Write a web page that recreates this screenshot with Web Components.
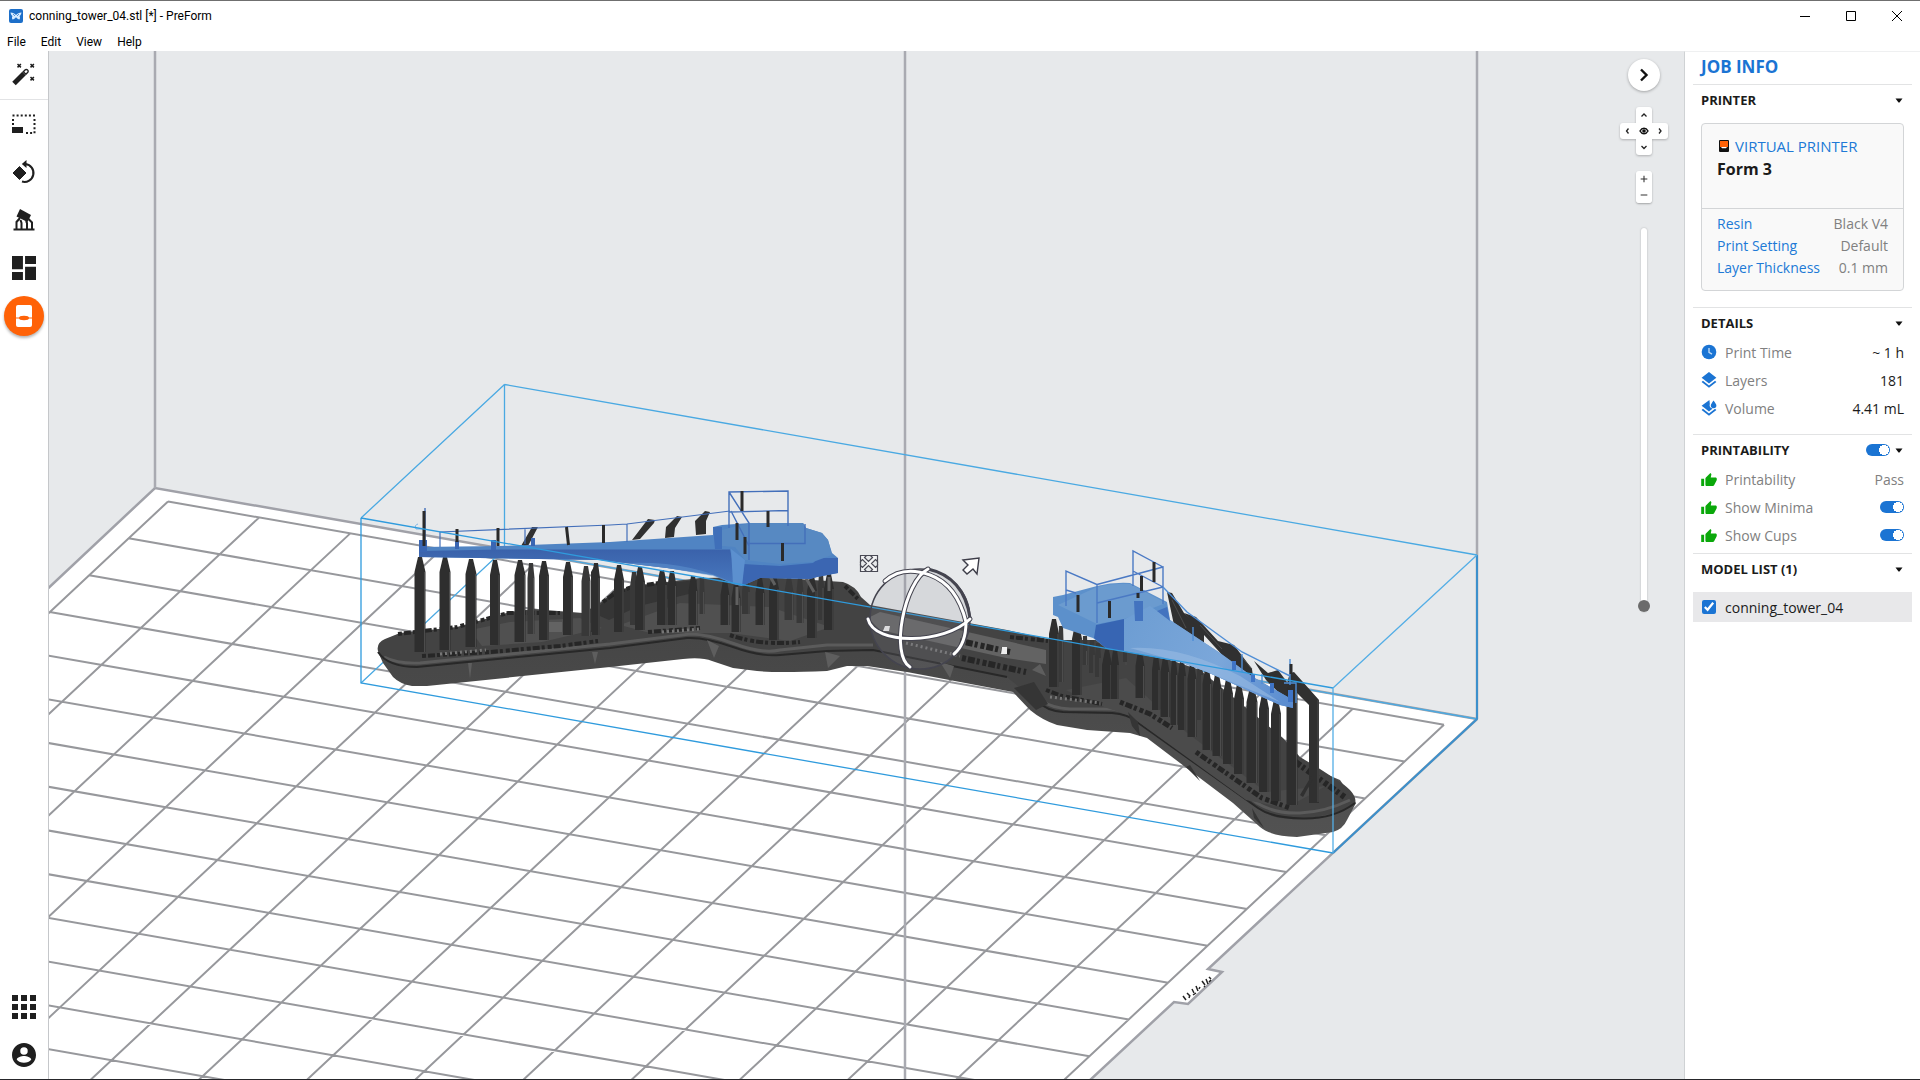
<!DOCTYPE html>
<html lang="en">
<head>
<meta charset="utf-8">
<title>conning_tower_04.stl [*] - PreForm</title>
<style>
	html, body {
		margin: 0;
		height: 100%;
	}
	body {
		font-family: "Open Sans", "Noto Sans", sans-serif;
		font-size: 12px;
		color: #1b1b1b;
		background: #fff;
	}
</style>
</head>
<body>
<pf-app></pf-app>

<script>
const ICONS = {
	logo: `<svg viewBox="0 0 14 14"><rect width="14" height="14" rx="2" fill="#1d6fc9"/><path d="M1.500 3.500c2.500 0 4 1 5.500 2.500 1.500-1.500 3-2.500 5.500-2.500-.3 2-1 3-2 3.500.8 1.200.6 2.400 0 3.500-1.400 0-2.500-1-3.500-2.200-1 1.200-2.100 2.200-3.500 2.200-.6-1.100-.8-2.300 0-3.500-1-.5-1.700-1.500-2-3.500z" fill="#d8ebff"/><path d="M4 5l2 2M10 5L8 7" stroke="#1d6fc9" stroke-width=".7"/></svg>`,
	wand: `<svg viewBox="0 0 24 24"><path d="M2 20.500L12 10.500" stroke="currentColor" stroke-width="5"/><path d="M11.300 8.700l1.700-1.700a1.800 1.800 0 0 1 2.600 0 1.800 1.800 0 0 1 0 2.600l-1.700 1.700z" fill="#fff" stroke="currentColor" stroke-width="1.400"/><path d="M5.500 1l3.400 3.400m0-3.400L5.500 4.400M18.500 1l3.400 3.400m0-3.400l-3.400 3.400M18.500 14l3.400 3.400m0-3.400l-3.400 3.400" stroke="currentColor" stroke-width="1.500"/></svg>`,
	scale: `<svg viewBox="0 0 24 24"><path d="M.500 3.500h23M1 7v6M22.500 7v15M14 21h8" fill="none" stroke="currentColor" stroke-width="2" stroke-dasharray="2 2.100"/><path d="M0 15h11v6H0z" fill="currentColor"/></svg>`,
	rotate: `<svg viewBox="0 -1 24 24"><path d="M7.500 5.500l6.500 6.500-6.500 6.500L1 12z" fill="currentColor" stroke="currentColor" stroke-width="1" stroke-linejoin="round"/><path d="M11 3h2.500a9 9 0 1 1-3.500 17.600" fill="none" stroke="currentColor" stroke-width="2.100"/><path d="M14.500-1v8L9.800 3z" fill="currentColor"/></svg>`,
	support: `<svg viewBox="0 0 24 24"><path d="M8 1l11 6-3.500 7L4.500 8.500z" fill="currentColor"/><path d="M1.500 21.500h21" stroke="currentColor" stroke-width="2"/><path d="M4.500 21v-7l3.500-4M9.500 21v-6l-1-3M15 21v-6l-1-2M20 21v-6.500L16.500 11" fill="none" stroke="currentColor" stroke-width="2"/></svg>`,
	layout: `<svg viewBox="3 3 18 18"><path d="M3 13h8.200V3H3v10zm0 8h8.200v-6H3v6zm9.800 0H21V11h-8.200v10zm0-18v6H21V3h-8.200z" fill="currentColor"/></svg>`,
	print: `<svg viewBox="0 0 24 24"><rect x="4" y="1" width="16" height="22" rx="2" fill="#fff"/><path d="M4 14h4c1-2 7-2 8 0h4" fill="none" stroke="#ff6207" stroke-width="1"/><ellipse cx="12" cy="14" rx="5" ry="2.200" fill="#ff6207"/></svg>`,
	apps: `<svg viewBox="0 0 24 24"><path d="M0 0h6v6H0zM9 0h6v6H9zM18 0h6v6h-6zM0 9h6v6H0zM9 9h6v6H9zM18 9h6v6h-6zM0 18h6v6H0zM9 18h6v6H9zM18 18h6v6h-6z" fill="currentColor"/></svg>`,
	account: `<svg viewBox="2 2 20 20"><path d="M12 2C6.480 2 2 6.480 2 12s4.480 10 10 10 10-4.480 10-10S17.520 2 12 2zm0 3.500a3 3 0 0 1 0 6.200 3 3 0 0 1 0-6.200zm0 13c-2.500 0-4.710-.9-6-2.500.03-1.990 4-3.080 6-3.080 1.990 0 5.970 1.090 6 3.080-1.290 1.600-3.500 2.500-6 2.500z" fill="currentColor"/></svg>`,
	clock: `<svg viewBox="0 0 16 16"><circle cx="8" cy="8" r="7.300" fill="#1b74d3"/><path d="M8 4v4.300l3 1.800" fill="none" stroke="#bcd9f5" stroke-width="1.400"/></svg>`,
	layers: `<svg viewBox="3 2 18 19.500"><path d="M11.990 18.540l-7.370-5.730L3 14.070l9 7 9-7-1.630-1.270-7.380 5.740zM12 16l7.360-5.730L21 9l-9-7-9 7 1.630 1.270L12 16z" fill="#1b74d3"/></svg>`,
	volume: `<svg viewBox="3 2 18 19.500"><path d="M11.990 18.540l-7.370-5.730L3 14.070l9 7 9-7-1.630-1.270-7.380 5.740zM12 16l4.500-3.500c-3-.5-4.500-3-3.500-6L12.500 2 3 9l1.630 1.270L12 16z" fill="#1b74d3"/><path d="M17.500 2.500c2 3 3.500 4.300 3.500 6.200a3.400 3.400 0 0 1-6.800 0c0-1.900 1.500-3.200 3.300-6.200z" fill="#1b74d3"/></svg>`,
	thumb: `<svg viewBox="0 1 24 20"><path d="M0 21h4.500V10H0v11zm24-11c0-1.100-.9-2-2-2h-7.310l.95-4.570.03-.32c0-.41-.17-.79-.44-1.060L14.170 1 7.590 7.590C6.700 8.400 6.500 8.800 6.500 9.500v9.500c0 1.100.9 2 2 2h9.500c.83 0 1.540-.5 1.840-1.220l3.800-7.050c.3-.5.360-.9.360-2.730z" fill="#0aa80a"/></svg>`,
	caret: `<svg viewBox="0 0 8 5"><path d="M.5.5h7L4.500 4.500h-1z" fill="#111"/></svg>`,
	form3: `<svg viewBox="0 0 10 12"><path d="M1 0h8a1 1 0 0 1 1 1v10a1 1 0 0 1-1 1H1a1 1 0 0 1-1-1V1a1 1 0 0 1 1-1z" fill="#111"/><path d="M1 1h8v6H1z" fill="#ff6207"/><path d="M2 7h6l-1 1.300H3z" fill="#fff"/></svg>`,
	eye: `<svg viewBox="0 0 12 12"><path d="M2 6c2-3.600 6-3.600 8 0-2 3.600-6 3.600-8 0z" fill="#fff" stroke="#111" stroke-width="1.500"/><circle cx="6" cy="6" r="1.800" fill="#111"/></svg>`,
	up: `<svg viewBox="0 0 12 12"><path d="M3.500 7.500L6 5l2.500 2.500" fill="none" stroke="#222" stroke-width="1.300"/></svg>`,
	down: `<svg viewBox="0 0 12 12"><path d="M3.500 5L6 7.500 8.500 5" fill="none" stroke="#222" stroke-width="1.300"/></svg>`,
	left: `<svg viewBox="0 0 12 12"><path d="M6.500 3.500L4.500 6l2 2.500" fill="none" stroke="#222" stroke-width="1.300"/></svg>`,
	right: `<svg viewBox="0 0 12 12"><path d="M5 3.500L7 6 5 8.500" fill="none" stroke="#222" stroke-width="1.300"/></svg>`,
	plus: `<svg viewBox="0 0 12 12"><path d="M2 6h8M6 2v8" stroke="#333" stroke-width="1.300"/></svg>`,
	minus: `<svg viewBox="0 0 12 12"><path d="M2 6h8" stroke="#333" stroke-width="1.300"/></svg>`,
	next: `<svg viewBox="0 0 12 12"><path d="M3 .5L8.500 6 3 11.500" fill="none" stroke="#111" stroke-width="2.400"/></svg>`,
	winmin: `<svg viewBox="0 0 12 12"><path d="M1 6.500h10" stroke="#000"/></svg>`,
	winmax: `<svg viewBox="0 0 12 12"><path d="M1.500 1.500h9v9h-9z" fill="none" stroke="#000"/></svg>`,
	winclose: `<svg viewBox="0 0 12 12"><path d="M1 1l10 10M11 1L1 11" stroke="#000"/></svg>`,
};

class PfIcon extends HTMLElement {
	constructor() {
		super();
		this.attachShadow({ mode: "open" });
	}

	connectedCallback() {
		const width = this.getAttribute("w") ?? "24";
		const height = this.getAttribute("h") ?? width;
		this.shadowRoot.innerHTML = `
			<style>
				:host { display: block; flex: none; width: ${width}px; height: ${height}px; }
				svg { display: block; width: 100%; height: 100%; overflow: visible; }
			</style>
			${ICONS[this.getAttribute("name")] ?? ""}
		`;
		this.shadowRoot.querySelector("svg")?.setAttribute("aria-hidden", "true");
	}
}
customElements.define("pf-icon", PfIcon);

class PfTitlebar extends HTMLElement {
	constructor() {
		super();
		this.attachShadow({ mode: "open" });
		this.shadowRoot.innerHTML = `
			<style>
				:host {
					display: block;
					background: #fff;
					color: #000;
					border-top: 1px solid #6f6f6f;
					font-family: Roboto, "Open Sans", sans-serif;
				}
				.bar {
					display: flex;
					align-items: center;
					height: 29px;
					padding-left: 9px;
					gap: 6px;
				}
				.title { flex: 1; }
				.bar button {
					display: grid;
					place-items: center;
					width: 46px;
					height: 28px;
				}
				.buttons { display: flex; }
				button {
					border: 0;
					padding: 0;
					margin: 0;
					background: none;
					font: inherit;
					color: inherit;
				}
				nav {
					display: flex;
					gap: 15px;
					height: 19px;
					align-items: center;
					padding: 2px 0 0 7px;
				}
			</style>
			<div class="bar">
				<pf-icon name="logo" w="14"></pf-icon>
				<span class="title"><slot></slot></span>
				<div class="buttons">
					<button aria-label="Minimize"><pf-icon name="winmin" w="12"></pf-icon></button>
					<button aria-label="Maximize"><pf-icon name="winmax" w="12"></pf-icon></button>
					<button aria-label="Close"><pf-icon name="winclose" w="12"></pf-icon></button>
				</div>
			</div>
			<nav>
				<button>File</button>
				<button>Edit</button>
				<button>View</button>
				<button>Help</button>
			</nav>
		`;
	}
}
customElements.define("pf-titlebar", PfTitlebar);

class PfToolbar extends HTMLElement {
	constructor() {
		super();
		this.attachShadow({ mode: "open" });
		this.shadowRoot.innerHTML = `
			<style>
				:host {
					display: flex;
					flex-direction: column;
					width: 48px;
					background: #fff;
					border-right: 1px solid #c5c7ca;
					color: #1f1f1f;
				}
				button {
					display: grid;
					place-items: center;
					height: 48px;
					width: 48px;
					border: 0;
					padding: 0;
					background: none;
					color: inherit;
				}
				hr {
					width: 100%;
					margin: 0;
					border: 0;
					border-top: 1px solid #e2e3e5;
				}
				.print span {
					display: grid;
					place-items: center;
					width: 40px;
					height: 40px;
					border-radius: 50%;
					background: #ff6207;
					box-shadow: 0 2px 3px rgba(0, 0, 0, 0.3);
				}
				.space { flex: 1; }
			</style>
			<button aria-label="One-click print"><pf-icon name="wand" w="24"></pf-icon></button>
			<hr>
			<button aria-label="Size"><pf-icon name="scale" w="24"></pf-icon></button>
			<button aria-label="Orientation"><pf-icon name="rotate" w="24"></pf-icon></button>
			<button aria-label="Supports"><pf-icon name="support" w="24"></pf-icon></button>
			<button aria-label="Layout"><pf-icon name="layout" w="24"></pf-icon></button>
			<button class="print" aria-label="Print"><span><pf-icon name="print" w="24"></pf-icon></span></button>
			<div class="space"></div>
			<button aria-label="Apps"><pf-icon name="apps" w="24"></pf-icon></button>
			<button aria-label="Account"><pf-icon name="account" w="24"></pf-icon></button>
		`;
	}
}
customElements.define("pf-toolbar", PfToolbar);

// supports: [center x, top, bottom, width]
const PILLARS_BACK = [
	[531, 563, 634, 7], [586, 566, 636, 9], [634, 572, 625, 8], [702, 577, 614, 5], [746, 577, 614, 8],
	[789, 577, 620, 9], [800, 577, 623, 7], [821, 573, 620, 6], [1061, 626, 682, 5], [1085, 636, 665, 5],
	[1092, 640, 673, 6], [1098, 643, 677, 6], [1125, 650, 662, 4], [1200, 660, 720, 6]
];
const PILLARS = [
	[420, 557, 652, 11], [445, 557, 650, 11], [471, 559, 647, 11], [495, 560, 645, 10], [520, 560, 642, 11],
	[544, 561, 640, 10], [568, 562, 635, 10], [596, 563, 635, 8], [619, 565, 632, 10], [640, 567, 630, 10],
	[662, 570, 625, 10], [672, 571, 625, 9], [693, 576, 625, 9], [725, 580, 625, 9], [736, 583, 632, 9],
	[760, 578, 625, 9], [774, 574, 640, 10], [812, 576, 638, 10], [829, 574, 630, 10],
	[1054, 619, 687, 10], [1077, 624, 695, 10], [1107, 650, 699, 10], [1115, 650, 699, 8], [1140, 651, 698, 9],
	[1156, 655, 710, 8], [1165, 657, 717, 9], [1174, 660, 725, 7], [1182, 661, 730, 8], [1192, 664, 737, 9],
	[1207, 669, 750, 9], [1217, 674, 756, 9], [1228, 679, 764, 10], [1239, 684, 774, 10], [1252, 687, 783, 11],
	[1264, 694, 792, 10], [1276, 699, 801, 10], [1292, 676, 805, 11]
];

function pillar([x, top, bottom, w], fill) {
	const r = w / 2;
	return `
		<path d="M${x - r} ${top + 15}L${x - 2} ${top}h4L${x + r} ${top + 15}V${bottom}H${x - r}z" fill="${fill}"/>
		<path d="M${x + r - 1} ${top + 15}V${bottom}" stroke="#4c4c4c" stroke-width="1"/>
	`;
}

// build plate lines, every cell is the same parallelogram
function grid() {
	let d = "";
	for (let row = 0; row <= 16; row++) {
		d += `M${168 - 39.4 * row} ${501.5 + 36.85 * row}L${1444 - 39.4 * row} ${724.7 + 36.85 * row}`;
	}
	for (let col = 0; col <= 14; col++) {
		const x = 168 + 91.14 * col;
		const y = 501.5 + 15.94 * col;
		d += `M${x} ${y}L${x - 39.4 * 16} ${y + 36.85 * 16}`;
	}
	return d;
}

class PfBuildView extends HTMLElement {
	constructor() {
		super();
		this.attachShadow({ mode: "open" });
		this.shadowRoot.innerHTML = `
			<style>
				:host {
					display: grid;
					grid-template: minmax(0, 1fr) / minmax(0, 1fr);
					overflow: hidden;
					background: #e7e9eb;
				}
				svg, .over { grid-area: 1 / 1; }
				svg {
					width: 100%;
					height: 100%;
					min-height: 0;
				}
				.over {
					justify-self: end;
					z-index: 1;
				}
			</style>
			<svg viewBox="49 51 1635 1028" preserveAspectRatio="xMidYMid slice" role="img" aria-label="Build platform">
				<defs>
					<linearGradient id="side" x1="0" y1="0" x2="0" y2="1">
						<stop offset="0" stop-color="#454545"/>
						<stop offset="1" stop-color="#525252"/>
					</linearGradient>
					<linearGradient id="hull" x1="0" y1="0" x2="0" y2="1">
						<stop offset="0" stop-color="#3a62ab"/>
						<stop offset="1" stop-color="#4878be"/>
					</linearGradient>
					<linearGradient id="arm" x1="1100" y1="620" x2="1290" y2="705" gradientUnits="userSpaceOnUse">
						<stop offset="0" stop-color="#6a9bd1"/>
						<stop offset="0.6" stop-color="#7ba7da"/>
						<stop offset="1" stop-color="#5a8cd0"/>
					</linearGradient>
				</defs>

				<path fill="#fff" d="M155 488L1477 719 1208 969 1222 972 1188 1004 1174 1002 1060 1108H-508z"/>
				<g fill="none" stroke="#97989c" stroke-width="2">
					<path d="${grid()}"/>
					<path d="M1477 719L1208 969 1222 972 1188 1004 1174 1002 1060 1108M-40 671L155 488 1477 719" stroke="#a0a1a8" stroke-width="2.500"/>
				</g>
				<path d="M155 51V488M1477 51V719M905 51V1079" stroke="#a9aab1" stroke-width="2.500"/>
				<path d="M1183 996l3 4M1187 993l3 3M1189 998l1-3M1192 989l2 4M1193 995l3-2M1196 986l2 5M1199 989l1-2M1202 981l3 4M1206 979l2 5M1209 982l2-2M1209 977l2 2M1205 986l-1 1" stroke="#222" stroke-width="1.500"/>

				<!-- selection box, far edges -->
				<g fill="none" stroke="#4aa9e2" stroke-width="1.300">
					<path d="M504.500 384.500V549L361 683M504.500 549L1477 719"/>
					<path d="M504.500 384.500L1477 555M361 518L504.500 384.500"/>
					<path d="M1477 555V719L1333 853" stroke="#3c90cc" stroke-width="2"/>
				</g>

				<!-- raft -->
				<path fill="url(#side)" d="M378 652L383 663 393 677Q400 684 412 686L427 686 610 667 683 659Q702 657 712 661L733 668 757 671Q777 673 827 671L847 666 867 666 907 672 1013 692 1030 710Q1042 720 1057 725L1087 730 1130 733 1147 738 1180 763 1233 803 1260 827Q1270 836 1297 837L1333 832Q1343 829 1347 820L1356 803 1340 780 1100 680 800 620 450 630z"/>
				<path fill="#434343" d="M378 651Q376 643 385 639L400 633 457 627 510 612 533 609 583 613 600 603Q614 592 633 586L700 578 767 577 843 582Q856 586 861 597L870 605 1007 630 1053 640 1110 640 1200 670 1283 738 1300 757 1320 769 1340 782Q1358 794 1355 804 1345 813 1303 819L1280 818Q1268 816 1255 807L1137 722Q1128 714 1110 713L1063 712Q1045 710 1035 700L1007 677 873 650 827 651 780 655Q760 655 745 650L715 641Q700 637 683 639L610 648 417 667Q385 667 378 651z"/>
				<path fill="none" stroke="#5b5b5b" stroke-width="3" d="M384 657Q398 664 420 663L610 644 690 634Q708 634 735 644T780 650L827 645 873 645M1042 701Q1052 708 1070 709L1112 709Q1130 711 1142 720L1257 803Q1275 814 1300 813T1350 800"/>
				<path fill="none" stroke="#282828" stroke-width="2" d="M378 652Q388 667 417 667L610 648 687 638Q705 637 733 647T780 655L827 651 873 650 1007 677M1037 701Q1047 711 1063 712L1112 713Q1128 714 1137 722L1258 808Q1272 818 1303 818.500T1355 803"/>
				<path fill="#505050" d="M470 630l40-8 70-4 22 10-60 14-60 4zM620 625l60-22 90 4 60 20-40 14-60-8-80 0z"/>
				<path fill="#636363" d="M548 622h14v10h-14zM868 618l12-6 166 38v14l-40-6-126-28z"/>
				<path fill="#4b4b4b" d="M1066 690l60-12 60 54 80 60 60-6-40 22-40-8-116-84-40-14z"/>
				<path fill="#353535" d="M593 613l20-22 24-5 60-6v12l-58 14-30 14zM1014 688l20-6 14 22-12 6zM1128 712l10 10 2 14-8-10zM1190 765l10 16-14-14zM1252 808l12 20-10-10z"/>
				<path fill="#5e5e5e" d="M468 663l4 0-2 16zM592 652h6l-3 12zM707 640l12 6-5 12zM825 652l15 4-12 12zM940 662l14 4-4 12zM1032 670l14 6-6-12z"/>
				<g fill="none" stroke="#262626" stroke-width="4" stroke-dasharray="4 2 7 2 3 3">
					<path d="M398 634L457 627 508 613 560 613"/>
					<path d="M422 656L490 652 560 646 598 641"/>
					<path d="M603 602Q620 588 640 586L664 582M845 586l14 14"/>
					<path d="M648 632L700 628M730 635Q760 646 800 642"/>
					<path d="M960 641L1010 652M962 658L1026 672" stroke-width="6"/>
					<path d="M1010 637L1048 641M1046 690l16 6 40 8"/>
					<path d="M1120 702L1150 714 1172 728M1196 752L1262 798 1290 808" stroke-width="5"/>
					<path d="M1290 758L1346 798" stroke-width="6"/>
				</g>
				<path fill="none" stroke="#777" stroke-dasharray="2 3" stroke-width="3" d="M440 654L486 650M662 632L700 629M906 643L960 656M1050 697L1100 703"/>
				<path fill="#eee" d="M1002 647h5v7h-6zM885 626h5l-1 5h-6z"/>

				<!-- support arms above the deck -->
				<g fill="#303030">
					<path d="M632 540l16-21 7 1-1 3-14 16zM665 538l1-11 11-11 5 1-7 11-1 9zM696 535l-1-14 10-10 5 1-4 9v13z"/>
					<path d="M521 546l11-19h6l-10 19zM596 563l-5 9v60h6z"/>
					<path d="M1167 592l5 1 12 20 20 18v18l-30-24z"/>
					<path d="M1184 613l12 4 22 24 16 4 18 24 2 16-30-28z"/>
					<path d="M1254 661l14 12 10-3 12 16 4 4-2 10-14-8-12-12z"/>
					<path d="M1290 673l4-1 25 28v103h-10v-98l-22-22z"/>
					<path d="M1300 795l12-20 1 4-10 18z"/>
				</g>
				<g fill="none" stroke="#4c4c4c"><path d="M1318 700V802M1172 600l14 28M1200 625l22 24M1240 655l12 14"/></g>

				${PILLARS_BACK.map(p => pillar(p, "#383838")).join("")}
				${PILLARS.map(p => pillar(p, "#2e2e2e")).join("")}
				<path d="M767 571l8 14M806 578l8 14M829 577v14M737 587v18" stroke="#606060" stroke-width="3"/>

				<!-- left tower part -->
				<path fill="#5084c3" d="M419 547L500 546 610 542 713 535V527L722 525 750 523H803L806 528 822 533 828 540 832 553 838 558V573L817 577 810 579 760 578 742 586 733 584 713 575 667 568 600 560 419 557z"/>
				<path fill="url(#hull)" d="M419 551L500 549.500H730L738 585 713 575 667 568 600 560 419 557z"/>
				<path fill="#5d92ce" opacity=".55" d="M625 563Q690 560 735 584L713 576 667 568z"/>
				<path fill="#3b66b2" d="M743 564L780 566 813 563 818 558H838V573L817 577 810 579 760 578 742 586z"/>
				<path fill="#5c90cf" d="M731 549L745 560 742 586 733 584z"/>
				<path fill="#5789c2" d="M750 523H803L806 528 822 533 828 540 832 555 813 562 780 564 745 560 735 547 722 546V530z"/>
				<path fill="#3f6fb9" d="M713 527h9v22h-7z"/>
				<g fill="none" stroke="#436fba" stroke-width="1.400">
					<path d="M729 528V492L788 491V526M729 512L788 510.500M729 492L749 523V560M731 511L749 546M749 543.500H805V524"/>
					<path d="M440 547V532L610 525 627 524 730 511M627 524V542M525 528v16" stroke-width="1.200"/>
					<path d="M425 508v40"/>
					<path d="M418 524q-4 1-2 5h10" stroke="#7fb6e6" stroke-width="1"/>
				</g>
				<path fill="#3a66b3" d="M419 540h8v12h-8zM455 541h4v8h-4zM491 540h5v10h-5zM531 538h4v8h-4z"/>
				<path fill="none" stroke="#2a2a2a" stroke-width="3" d="M424 511V546M457 529v13M498 528v18M566.500 527l2 18M603.500 525v18M742 491v20M768 511v16M737 523v17M745 537v17M782.500 543v18"/>

				<!-- right tower part -->
				<path fill="#5c90cb" d="M1053 597L1063 595 1097 586Q1113 582 1130 583L1167 602 1170 620 1220 653 1253 677 1293 700V708L1280 705 1207 672 1180 662 1123 651 1107 649 1093 638 1063 628 1058 617 1053 615z"/>
				<path fill="#6b9bcf" d="M1058 605L1097 587Q1113 583 1130 584L1166 603 1124 619 1097 624z"/>
				<path fill="url(#arm)" d="M1123 620L1150 606 1170 620 1220 653 1253 677 1293 700V708L1280 705 1207 672 1180 662 1123 651z"/>
				<path fill="#97bbe3" opacity=".6" d="M1130 648Q1180 645 1240 676L1280 702 1207 672 1180 662z"/>
				<path fill="#3765b3" d="M1096 625L1124 619V651L1107 649 1094 638z"/>
				<path fill="#4373bf" d="M1157 611L1167 607 1170 621zM1134 601h9v20h-8z"/>
				<g fill="none" stroke="#4a79c4" stroke-width="1.400">
					<path d="M1066 606V571L1097 584.500V623M1097 584.500L1163 567V604M1133 586V551L1163 567M1097 603L1163 587M1133 571L1163 587M1066 590l10 3"/>
					<path d="M1163 587L1187 612 1242 652 1290 676M1193 627v14M1242 654v18M1262 674v10M1290 659v26M1284 683h12v20" stroke="#4f8ed6"/>
				</g>
				<path fill="#3f74c6" d="M1232 661h4v9h-4zM1251 674h4v8h-4zM1270 683h4v10h-4zM1288 690h5v12h-5z"/>
				<path fill="none" stroke="#2a2a2a" stroke-width="3" d="M1078 595v17M1109.500 601v17M1141.500 576v15M1154 562v20M1138 593v5M1291 664v10"/>

				<!-- selection box, near edges -->
				<g fill="none" stroke="#2f9bdd" stroke-width="1.300">
					<path d="M361 518V683L1333 853M361 518L1333 688"/>
					<path d="M1333 688V853M1333 688L1477 555" stroke="#54aee6"/>
				</g>

				<!-- orientation gizmo -->
				<circle cx="920" cy="619" r="50" fill="#8c8c96" fill-opacity=".18" stroke="#44444f" stroke-width="1.500"/>
				<g fill="none" stroke-linecap="round">
					<g stroke="#44444f" stroke-width="5">
						<path d="M885 581Q903 565 930 575T966 622Q966 644 954 654"/>
						<path d="M928 569C904 582 890 655 910 667"/>
						<path d="M868 619C874 646 945 644 970 619"/>
						<path d="M928 569Q964 577 970 618" stroke-width="3"/>
					</g>
					<g stroke="#fff" stroke-width="3">
						<path d="M885 581Q903 565 930 575T966 622Q966 644 954 654"/>
						<path d="M928 569C904 582 890 655 910 667"/>
						<path d="M868 619C874 646 945 644 970 619"/>
					</g>
				</g>
				<path d="M963 560L979 558 977 574 973 569 967 574 963 570 968 565z" fill="#fff" stroke="#3d3d48" stroke-width="1.400"/>
				<g fill="none" stroke="#4a4a55" stroke-width="1.200">
					<path d="M860.500 555.500h6l-2 2 4 4 4-4-2-2h7v6l-2-2-4 4 4 4 2-2v6h-7l2-2-4-4-4 4 2 2h-6v-6l2 2 4-4-4-4-2 2z" fill="#f4f5f6"/>
					<path d="M860.500 561.500v4M877.500 561.500v4M866.500 555.500h4M866.500 571.500h4"/>
				</g>
			</svg>
			<div class="over"><slot></slot></div>
		`;
	}
}
customElements.define("pf-build-view", PfBuildView);

class PfViewControls extends HTMLElement {
	constructor() {
		super();
		this.attachShadow({ mode: "open" });
		this.shadowRoot.innerHTML = `
			<style>
				:host {
					display: flex;
					flex-direction: column;
					align-items: center;
					gap: 16px;
					width: 48px;
					padding: 8px 16px;
				}
				button {
					display: grid;
					place-items: center;
					border: 0;
					padding: 0;
					width: 16px;
					height: 16px;
					background: #fff;
				}
				.next {
					width: 32px;
					height: 32px;
					border-radius: 50%;
					box-shadow: 0 1px 3px rgba(0, 0, 0, 0.3);
				}
				.pad {
					display: grid;
					grid-template-areas: ". up ." "left eye right" ". down .";
					filter: drop-shadow(0 1px 1px rgba(0, 0, 0, 0.25));
				}
				.up { grid-area: up; border-radius: 3px 3px 0 0; }
				.left { grid-area: left; border-radius: 3px 0 0 3px; }
				.eye { grid-area: eye; }
				.right { grid-area: right; border-radius: 0 3px 3px 0; }
				.down { grid-area: down; border-radius: 0 0 3px 3px; }
				.zoom {
					border-radius: 3px;
					overflow: hidden;
					box-shadow: 0 1px 2px rgba(0, 0, 0, 0.3);
				}
				input {
					appearance: none;
					writing-mode: vertical-lr;
					direction: rtl;
					width: 12px;
					height: 384px;
					margin: 9px 0 0;
					background: none;
				}
				input::-webkit-slider-runnable-track {
					width: 6px;
					border-radius: 3px;
					background: #fff;
					box-shadow: 0 0 2px rgba(0, 0, 0, 0.25);
				}
				input::-webkit-slider-thumb {
					appearance: none;
					width: 12px;
					height: 12px;
					margin-left: -3px;
					border-radius: 50%;
					background: #6b6b6b;
				}
			</style>
			<button class="next" aria-label="Collapse job info"><pf-icon name="next" w="12"></pf-icon></button>
			<div class="pad">
				<button class="up" aria-label="View from top"><pf-icon name="up" w="12"></pf-icon></button>
				<button class="left" aria-label="View from left"><pf-icon name="left" w="12"></pf-icon></button>
				<button class="eye" aria-label="Reset view"><pf-icon name="eye" w="12"></pf-icon></button>
				<button class="right" aria-label="View from right"><pf-icon name="right" w="12"></pf-icon></button>
				<button class="down" aria-label="View from bottom"><pf-icon name="down" w="12"></pf-icon></button>
			</div>
			<div class="zoom">
				<button aria-label="Zoom in"><pf-icon name="plus" w="10"></pf-icon></button>
				<button aria-label="Zoom out"><pf-icon name="minus" w="10"></pf-icon></button>
			</div>
			<input type="range" min="0" max="181" value="0" aria-label="Layer">
		`;
	}
}
customElements.define("pf-view-controls", PfViewControls);

// shared by the section header and the rows
const SWITCH_CSS = `
	input[role=switch] {
		appearance: none;
		width: 24px;
		height: 12px;
		margin: 0;
		border-radius: 6px;
		background: radial-gradient(circle at 18px 6px, #fff 5px, #1b74d3 5px);
	}
`;

class PfSection extends HTMLElement {
	constructor() {
		super();
		this.attachShadow({ mode: "open" });
	}

	connectedCallback() {
		const heading = this.getAttribute("heading");
		this.shadowRoot.innerHTML = `
			<style>
				:host {
					display: block;
					border-top: 1px solid #e2e3e4;
				}
				header {
					display: flex;
					align-items: center;
					height: 30px;
					padding: 0 9px 0 8px;
					gap: 5px;
				}
				h2 {
					flex: 1;
					margin: 0;
					font-size: 13px;
					line-height: 20px;
					font-weight: 700;
					color: #1b1b1b;
				}
				button {
					display: grid;
					place-items: center;
					width: 8px;
					height: 16px;
					padding: 0;
					border: 0;
					background: none;
				}
				${SWITCH_CSS}
			</style>
			<header>
				<h2>${heading}</h2>
				${this.hasAttribute("switch") ? `<input type="checkbox" role="switch" checked aria-label="${heading}">` : ""}
				<button aria-label="Collapse ${heading}"><pf-icon name="caret" w="8" h="5"></pf-icon></button>
			</header>
			<slot></slot>
		`;
	}
}
customElements.define("pf-section", PfSection);

class PfRow extends HTMLElement {
	constructor() {
		super();
		this.attachShadow({ mode: "open" });
	}

	connectedCallback() {
		const toggle = this.hasAttribute("switch");
		const label = this.getAttribute("label");
		this.shadowRoot.innerHTML = `
			<style>
				:host {
					display: flex;
					align-items: center;
					height: 28px;
					padding: 0 8px;
					gap: 8px;
					font-size: 14px;
				}
				.label {
					flex: 1;
					color: #808080;
				}
				.value { color: #1b1b1b; }
				:host([muted]) .value { color: #808080; }
				${SWITCH_CSS}
			</style>
			<pf-icon name="${this.getAttribute("icon")}" w="16" h="${this.getAttribute("icon") === "thumb" ? 13 : 16}"></pf-icon>
			${toggle
				? `<label class="label" for="toggle">${label}</label><input id="toggle" type="checkbox" role="switch" checked>`
				: `<span class="label">${label}</span><span class="value"><slot></slot></span>`}
		`;
	}
}
customElements.define("pf-row", PfRow);

class PfPrinterCard extends HTMLElement {
	constructor() {
		super();
		this.attachShadow({ mode: "open" });
		this.shadowRoot.innerHTML = `
			<style>
				:host {
					display: block;
					margin: 8px 8px 16px;
					border: 1px solid #d3d5d7;
					border-radius: 4px;
					background: #f9f9f9;
					font-size: 14px;
				}
				.printer {
					height: 72px;
					padding: 12px 15px 0;
					border-bottom: 1px solid #d3d5d7;
				}
				.kind {
					display: flex;
					align-items: center;
					gap: 6px;
					padding-left: 2px;
					font-size: 15px;
					line-height: 20px;
				}
				a {
					color: #2079d6;
					text-decoration: none;
				}
				h3 {
					margin: 0;
					font-size: 16px;
					line-height: 26px;
					font-weight: 700;
				}
				dl {
					display: grid;
					grid-template-columns: auto auto;
					justify-content: space-between;
					margin: 0;
					padding: 4px 15px 11px;
					line-height: 22px;
				}
				dt { color: #2079d6; }
				dd { margin: 0; text-align: right; color: #808080; }
			</style>
			<div class="printer">
				<div class="kind"><pf-icon name="form3" w="10" h="12"></pf-icon><a href="#printer">VIRTUAL PRINTER</a></div>
				<h3>Form 3</h3>
			</div>
			<dl>
				<dt>Resin</dt><dd>Black V4</dd>
				<dt>Print Setting</dt><dd>Default</dd>
				<dt>Layer Thickness</dt><dd>0.1 mm</dd>
			</dl>
		`;
	}
}
customElements.define("pf-printer-card", PfPrinterCard);

class PfModelItem extends HTMLElement {
	constructor() {
		super();
		this.attachShadow({ mode: "open" });
		this.shadowRoot.innerHTML = `
			<style>
				:host {
					display: block;
					margin-top: 8px;
					background: #e8e8ea;
					font-size: 14px;
				}
				label {
					display: flex;
					align-items: center;
					gap: 8px;
					height: 30px;
					padding: 0 8px;
				}
				input {
					width: 14px;
					height: 14px;
					margin: 0 1px;
					accent-color: #1b74d3;
				}
			</style>
			<label><input type="checkbox" checked><slot></slot></label>
		`;
	}
}
customElements.define("pf-model-item", PfModelItem);

class PfJobPanel extends HTMLElement {
	constructor() {
		super();
		this.attachShadow({ mode: "open" });
		this.shadowRoot.innerHTML = `
			<style>
				:host {
					display: block;
					box-sizing: border-box;
					width: 236px;
					padding: 0 8px;
					background: #fff;
					border-left: 1px solid #cfd2d4;
					border-top: 1px solid #eff0f1;
				}
				h1 {
					margin: 0;
					padding: 0 8px 2px;
					font-size: 17px;
					line-height: 30px;
					font-weight: 700;
					color: #1b74d3;
				}
				.details { padding-bottom: 12px; }
				.printability { padding-bottom: 4px; }
			</style>
			<h1>JOB INFO</h1>
			<pf-section heading="PRINTER">
				<pf-printer-card></pf-printer-card>
			</pf-section>
			<pf-section heading="DETAILS">
				<div class="details">
					<pf-row icon="clock" label="Print Time">~ 1 h</pf-row>
					<pf-row icon="layers" label="Layers">181</pf-row>
					<pf-row icon="volume" label="Volume">4.41 mL</pf-row>
				</div>
			</pf-section>
			<pf-section heading="PRINTABILITY" switch>
				<div class="printability">
					<pf-row icon="thumb" label="Printability" muted>Pass</pf-row>
					<pf-row icon="thumb" label="Show Minima" switch></pf-row>
					<pf-row icon="thumb" label="Show Cups" switch></pf-row>
				</div>
			</pf-section>
			<pf-section heading="MODEL LIST (1)">
				<pf-model-item>conning_tower_04</pf-model-item>
			</pf-section>
		`;
	}
}
customElements.define("pf-job-panel", PfJobPanel);

class PfApp extends HTMLElement {
	constructor() {
		super();
		this.attachShadow({ mode: "open" });
		this.shadowRoot.innerHTML = `
			<style>
				:host {
					display: flex;
					flex-direction: column;
					box-sizing: border-box;
					height: 100vh;
					border-bottom: 1px solid #26262a;
				}
				main {
					display: flex;
					flex: 1;
					min-height: 0;
				}
				pf-build-view { flex: 1; min-width: 0; }
				pf-toolbar, pf-job-panel { flex: none; }
			</style>
			<pf-titlebar>conning_tower_04.stl [*] - PreForm</pf-titlebar>
			<main>
				<pf-toolbar></pf-toolbar>
				<pf-build-view><pf-view-controls></pf-view-controls></pf-build-view>
				<pf-job-panel></pf-job-panel>
			</main>
		`;
	}
}
customElements.define("pf-app", PfApp);
</script>
</body>
</html>
